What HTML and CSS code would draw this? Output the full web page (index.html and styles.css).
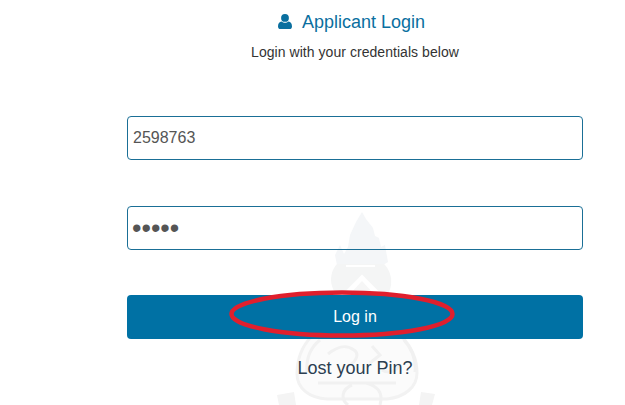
FILE: index.html
```html
<!DOCTYPE html>
<html lang="en">
<head>
<meta charset="utf-8">
<title>Applicant Login</title>
<link rel="stylesheet" href="styles.css">
</head>
<body>
<svg class="crest" viewBox="270 205 175 200" aria-hidden="true">
  <path class="crest-flame" d="M362 212l4 7 7 9 2 8 4 2 2 9 4-2 3 17-5 3h-46l-2-10 5-10 4 9 4-7 2-12 6-13z"/>
  <path class="crest-pot" d="M337 264c-6 6-7 16-5 22 2 8 8 13 14 16h32c7-3 12-9 13-17 1-7-1-15-7-21z"/>
  <path class="crest-cut" d="M346 266h29M362 276l20 20-9 8h-22l-9-8z"/>
  <path class="crest-inner" d="M362 281l13 14-13 12-13-12z"/>
  <path class="crest-body" d="M312 336c-10 10-15 24-15 38 0 14 12 24 30 25h60c18-2 30-12 30-26 0-14-6-27-16-37z"/>
  <path class="crest-line" d="M320 340c-10 8-14 20-13 32M404 340c8 9 12 20 11 32M318 383h78M328 354c10-8 18-10 26-4 6 4 2 12-6 16M372 346l8 9-10 8M352 385c-10 4-12 14-4 20M366 383c10 3 18 8 14 22M382 370c6 4 14 2 18-6"/>
  <path class="crest-side" d="M277 395l17-3 2 13h-17zM421 392l14 2-3 11h-13z"/>
</svg>
<main class="login">
  <h1 class="title">
    <svg class="user-icon" viewBox="0 0 14 15" aria-hidden="true"><path d="M7 0a3.900 3.900 0 1 1 0 7.800A3.900 3.900 0 0 1 7 0zM3.600 7.400C4.500 8.300 5.700 8.800 7 8.800s2.500-.5 3.400-1.400c2.300.2 3.600 2 3.600 5 0 1.600-1 2.600-2.500 2.600h-9C1 15 0 14 0 12.400c0-3 1.300-4.800 3.600-5z" fill="currentColor"/></svg>
    <span>Applicant Login</span>
  </h1>
  <p class="subtitle">Login with your credentials below</p>
  <form class="form">
    <input class="field" type="text" value="2598763" aria-label="Applicant number">
    <input class="field field-secret" type="password" value="abcde" aria-label="Pin">
    <button class="submit" type="button">Log in</button>
  </form>
  <a class="lost" href="#">Lost your Pin?</a>
</main>
<svg class="annotation" viewBox="0 0 230 52" aria-hidden="true"><ellipse cx="115" cy="26" rx="110.500" ry="21.500" fill="none" stroke="#e01f2d" stroke-width="4.500"/></svg>
</body>
</html>
```
FILE: styles.css
```css
html, body {
  margin: 0;
  height: 405px;
  overflow: hidden;
  background: #fff;
}
body {
  position: relative;
  font-family: "Liberation Sans", Arial, sans-serif;
  color: #333;
}
.crest {
  position: absolute;
  left: 270px;
  top: 205px;
  width: 175px;
  height: 200px;
}
.crest-flame { fill: #f4f6f8; }
.crest-pot { fill: #f4f5f5; }
.crest-cut { fill: #fff; stroke: #fff; stroke-width: 2; }
.crest-inner { fill: #f6f6f6; }
.crest-body { fill: #fbfbfb; stroke: #f2f2f2; stroke-width: 3; }
.crest-line { fill: none; stroke: #f1f1f1; stroke-width: 3; }
.crest-side { fill: #f4f4f4; }
.login {
  position: relative;
  width: 456px;
  margin-left: 127px;
  display: flex;
  flex-direction: column;
  align-items: center;
}
.title {
  display: flex;
  align-items: center;
  gap: 10px;
  margin: 12px 7px 0 0;
  font-size: 18px;
  line-height: 20px;
  font-weight: 400;
  color: #0a6f9f;
}
.user-icon {
  width: 14px;
  height: 15px;
  margin-top: -2px;
}
.subtitle {
  margin: 10px 0 0;
  font-size: 14px;
  line-height: 20px;
  letter-spacing: .05px;
  color: #333;
}
.form {
  width: 100%;
  margin-top: 54px;
  display: flex;
  flex-direction: column;
  gap: 46px;
}
.field {
  box-sizing: border-box;
  width: 100%;
  height: 44px;
  padding: 0 4px 0 5px;
  border: 1px solid #1a6f96;
  border-radius: 4px;
  background: transparent;
  font: 16px "Liberation Sans", Arial, sans-serif;
  color: #555;
  outline: none;
}
.field-secret {
  padding-left: 4px;
  font-size: 27px;
}
.submit {
  width: 100%;
  height: 44px;
  margin-top: -1px;
  border: 0;
  border-radius: 4px;
  background: #0071a4;
  color: #fff;
  font: 16px "Liberation Sans", Arial, sans-serif;
}
.lost {
  margin-top: 19px;
  font-size: 18px;
  line-height: 20px;
  color: #2c3e50;
  text-decoration: none;
}
.annotation {
  position: absolute;
  left: 227px;
  top: 288px;
  width: 230px;
  height: 52px;
}
```
